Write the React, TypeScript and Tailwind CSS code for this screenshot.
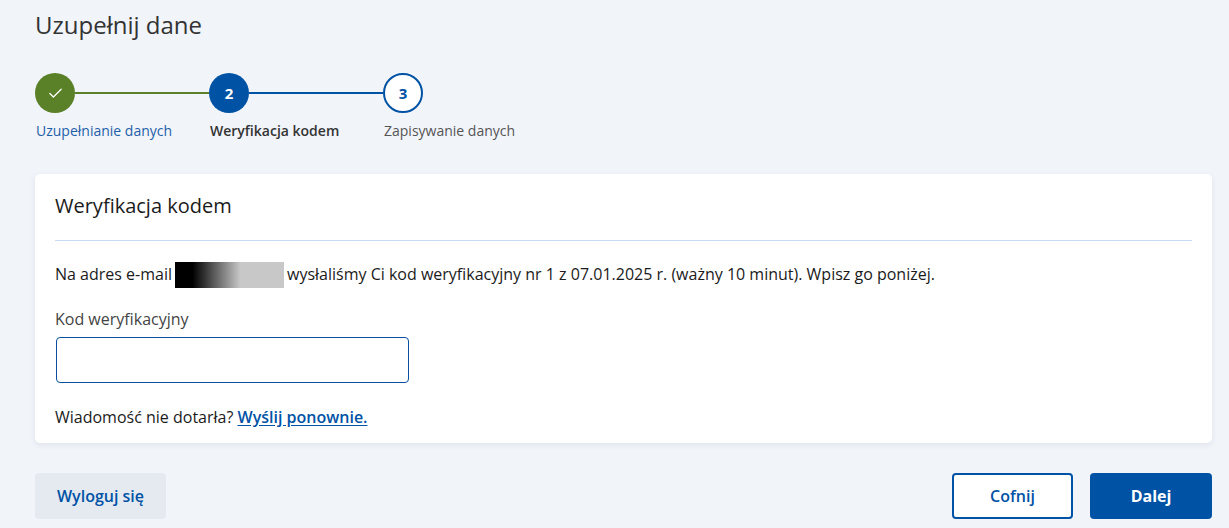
import { Check } from "lucide-react"

const steps = [
  { label: "Uzupełnianie danych", state: "done" },
  { label: "Weryfikacja kodem", state: "active" },
  { label: "Zapisywanie danych", state: "todo" },
]

const StepCircle = ({ state, index }: { state: string; index: number }) => {
  if (state === "done") {
    return (
      <div className="w-[40px] h-[40px] rounded-full bg-[#5b8128] flex items-center justify-center shrink-0">
        <Check className="w-[17px] h-[17px] text-white" strokeWidth={1.75} />
      </div>
    )
  }
  if (state === "active") {
    return (
      <div className="w-[40px] h-[40px] rounded-full bg-[#0052a5] flex items-center justify-center text-white text-[15px] font-bold shrink-0">
        {index + 1}
      </div>
    )
  }
  return (
    <div className="w-[40px] h-[40px] rounded-full bg-white border-2 border-[#0052a5] flex items-center justify-center text-[#0052a5] text-[15px] font-bold shrink-0">
      {index + 1}
    </div>
  )
}

export default function App() {
  return (
    <div
      className="min-h-[528px] bg-[#f1f4f9] pl-[35px] pr-[17px] pt-[8px] pb-[8px] text-[#1b1b1b]"
      style={{ fontFamily: '"Open Sans", "Noto Sans", sans-serif' }}
    >
      <h1 className="text-[24px] leading-[34px] text-[#333333]">Uzupełnij dane</h1>

      {/* Stepper */}
      <div className="mt-[31px] flex">
        {steps.map((step, i) => (
          <div key={step.label} className="w-[174px]">
            <div className="flex items-center">
              <StepCircle state={step.state} index={i} />
              {i < steps.length - 1 && (
                <div
                  className={
                    step.state === "done"
                      ? "flex-1 h-[2px] bg-[#5b8128]"
                      : "flex-1 h-[2px] bg-[#0052a5]"
                  }
                />
              )}
            </div>
            <div
              className={
                step.state === "done"
                  ? "mt-[8px] pl-[1px] text-[14px] leading-[20px] text-[#1d5fa8] whitespace-nowrap"
                  : step.state === "active"
                  ? "mt-[8px] pl-[1px] text-[14px] leading-[20px] font-semibold text-[#333333] whitespace-nowrap"
                  : "mt-[8px] pl-[1px] text-[14px] leading-[20px] text-[#555555] whitespace-nowrap"
              }
            >
              {step.label}
            </div>
          </div>
        ))}
      </div>

      {/* Card */}
      <div className="mt-[33px] bg-white rounded-[5px] shadow-[0_2px_6px_rgba(30,50,90,0.08)] px-[20px] pt-[18px] pb-[15px]">
        <h2 className="text-[20px] leading-[28px] text-[#1b1b1b]">Weryfikacja kodem</h2>
        <div className="mt-[20px] h-px bg-[#c8dbf2]" />
        <p className="mt-[20px] text-[16px] leading-[26px]">
          Na adres e-mail
          <span className="inline-block align-middle -mt-[2px] mx-[3px] w-[109px] h-[26px] bg-[linear-gradient(to_right,#000000_0%,#000000_16%,#c8c8c8_60%,#c8c8c8_100%)]" />
          wysłaliśmy Ci kod weryfikacyjny nr 1 z 07.01.2025 r. (ważny 10 minut). Wpisz go poniżej.
        </p>
        <label className="block mt-[20px] text-[16px] leading-[22px] text-[#444444]">
          Kod weryfikacyjny
        </label>
        <input
          type="text"
          className="block mt-[7px] ml-px w-[353px] h-[46px] rounded-[4px] border border-[#0a4f9e] bg-white outline-none px-3"
        />
        <p className="mt-[23px] text-[16px] leading-[22px]">
          Wiadomość nie dotarła?{" "}
          <a href="#" className="text-[#0052a5] font-semibold underline underline-offset-2">
            Wyślij ponownie.
          </a>
        </p>
      </div>

      {/* Actions */}
      <div className="mt-[30px] flex items-center">
        <button className="w-[131px] h-[46px] rounded-[4px] bg-[#e5eaf1] text-[#0052a5] text-[16px] font-semibold">
          Wyloguj się
        </button>
        <div className="ml-auto flex gap-[17px]">
          <button className="w-[121px] h-[46px] rounded-[4px] border-2 border-[#0052a5] bg-white text-[#0052a5] text-[16px] font-semibold">
            Cofnij
          </button>
          <button className="w-[122px] h-[46px] rounded-[4px] bg-[#0052a5] text-white text-[16px] font-bold">
            Dalej
          </button>
        </div>
      </div>
    </div>
  )
}
